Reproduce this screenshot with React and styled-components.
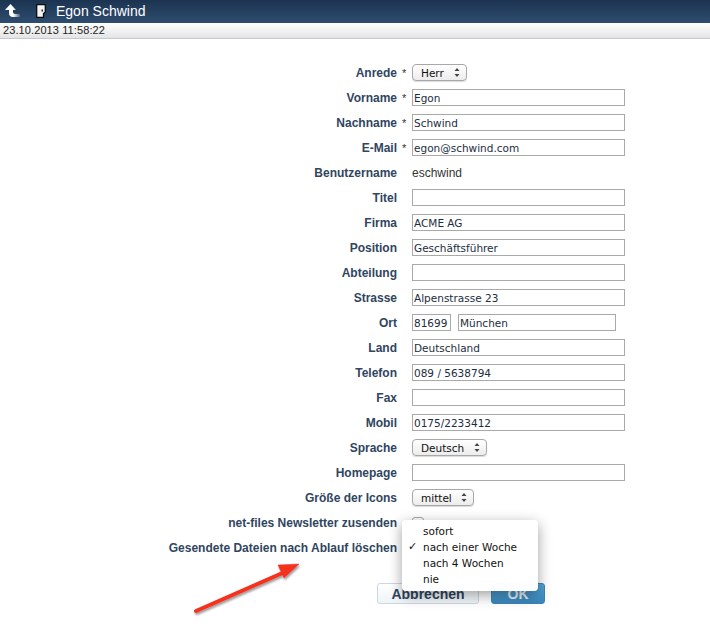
import React from 'react';
import styled, { createGlobalStyle } from 'styled-components';

const GlobalStyle = createGlobalStyle`
  html, body {
    margin: 0;
    padding: 0;
    background: #fff;
    font-family: "Liberation Sans", Arial, sans-serif;
  }
`;

const Page = styled.div`
  position: relative;
  width: 710px;
  height: 641px;
  overflow: hidden;
`;

const Header = styled.header`
  box-sizing: border-box;
  display: flex;
  align-items: center;
  height: 23px;
  padding: 0 0 2px 5px;
  background: linear-gradient(#1b3350, #2f4d70);
  color: #fff;
`;

const HeaderTitle = styled.h1`
  margin: 0 0 0 10px;
  font-size: 14px;
  font-weight: normal;
  line-height: 20px;
`;

const DoorIcon = styled.svg`
  margin-left: 16px;
`;

const DateBar = styled.div`
  height: 15px;
  padding-left: 3px;
  border-bottom: 1px solid #c3c8d2;
  background: linear-gradient(#fff, #e4e4e4);
  font-size: 11px;
  letter-spacing: 0.1px;
  line-height: 15px;
  color: #222;
`;

const Form = styled.div`
  display: grid;
  grid-template-columns: 397px 15px 1fr;
  grid-auto-rows: 25px;
  align-items: center;
  padding-top: 21px;
`;

const Label = styled.label`
  text-align: right;
  font-size: 12px;
  font-weight: bold;
  color: #2f4560;
`;

const Star = styled.span`
  padding-left: 5px;
  font-size: 11px;
  color: #333;
`;

const Field = styled.div`
  display: flex;
  gap: 7px;
  font-size: 12px;
  color: #333;
`;

const TextInput = styled.input`
  box-sizing: border-box;
  width: ${(p) => p.$width || 213}px;
  height: 17px;
  padding: 0 1px;
  border: 1px solid #a9a9a9;
  border-radius: 0;
  outline: none;
  background: #fff;
  font-family: "DejaVu Sans", Verdana, sans-serif;
  font-size: 10.5px;
  color: #1d2d40;
`;

const SelectBox = styled.div`
  box-sizing: border-box;
  display: flex;
  align-items: center;
  justify-content: space-between;
  width: ${(p) => p.$width}px;
  height: 17px;
  padding: 0 6px 0 8px;
  border: 1px solid #a8a8a8;
  border-radius: 4px;
  background: linear-gradient(#fff, #ececec);
  box-shadow: 0 1px 1px rgba(0, 0, 0, 0.15);
  font-family: "DejaVu Sans", Verdana, sans-serif;
  font-size: 10.5px;
  color: #111;
`;

const Checkbox = styled.span`
  display: block;
  box-sizing: border-box;
  width: 12px;
  height: 12px;
  border: 1px solid #a8a8a8;
  border-radius: 3px;
  background: #fff;
`;

const Buttons = styled.div`
  display: flex;
  gap: 12px;
  margin: 23px 0 0 377px;
`;

const Button = styled.button`
  box-sizing: border-box;
  width: ${(p) => p.$width}px;
  height: 21px;
  padding: 0;
  border: 1px solid ${(p) => (p.$primary ? '#3b85b8' : '#ccd8e0')};
  border-radius: 3px;
  background: ${(p) => (p.$primary ? 'linear-gradient(#55a6d8, #3a86bb)' : 'linear-gradient(#fff, #eff4f7)')};
  color: ${(p) => (p.$primary ? '#e8f2f8' : '#2f4560')};
  font-family: "Liberation Sans", Arial, sans-serif;
  font-size: 14px;
  font-weight: bold;
`;

const Menu = styled.ul`
  position: absolute;
  left: 402px;
  top: 520px;
  width: 136px;
  margin: 0;
  padding: 3px 0 4px;
  list-style: none;
  border-radius: 4px;
  background: rgba(255, 255, 255, 0.98);
  box-shadow: 0 4px 14px rgba(0, 0, 0, 0.38);
  font-family: "DejaVu Sans", Verdana, sans-serif;
  font-size: 10.5px;
  color: #111;
`;

const MenuItem = styled.li`
  position: relative;
  height: 16px;
  padding-left: 21px;
  line-height: 16px;
`;

const Check = styled.span`
  position: absolute;
  left: 6px;
  top: 0;
  font-size: 11px;
  font-weight: bold;
`;

const Arrow = styled.svg`
  position: absolute;
  left: 190px;
  top: 558px;
`;

const Chevrons = () => (
  <svg width="6" height="9" viewBox="0 0 6 9">
    <path d="M3 0 L5.5 3 H0.5 Z M3 9 L0.5 6 H5.5 Z" fill="#444" />
  </svg>
);

const rows = [
  { label: 'Anrede', star: true, select: 'Herr', width: 55 },
  { label: 'Vorname', star: true, value: 'Egon' },
  { label: 'Nachname', star: true, value: 'Schwind' },
  { label: 'E-Mail', star: true, value: 'egon@schwind.com' },
  { label: 'Benutzername', text: 'eschwind' },
  { label: 'Titel', value: '' },
  { label: 'Firma', value: 'ACME AG' },
  { label: 'Position', value: 'Geschäftsführer' },
  { label: 'Abteilung', value: '' },
  { label: 'Strasse', value: 'Alpenstrasse 23' },
  { label: 'Ort', city: true },
  { label: 'Land', value: 'Deutschland' },
  { label: 'Telefon', value: '089 / 5638794' },
  { label: 'Fax', value: '' },
  { label: 'Mobil', value: '0175/2233412' },
  { label: 'Sprache', select: 'Deutsch', width: 75 },
  { label: 'Homepage', value: '' },
  { label: 'Größe der Icons', select: 'mittel', width: 62 },
  { label: 'net-files Newsletter zusenden', checkbox: true },
  { label: 'Gesendete Dateien nach Ablauf löschen' },
];

const renderField = (row) => {
  if (row.select) {
    return (
      <SelectBox $width={row.width}>
        {row.select}
        <Chevrons />
      </SelectBox>
    );
  }
  if (row.city) {
    return (
      <>
        <TextInput $width={39} value="81699" readOnly />
        <TextInput $width={158} value="München" readOnly />
      </>
    );
  }
  if (row.checkbox) return <Checkbox />;
  if (row.text) return row.text;
  if (row.value !== undefined) return <TextInput value={row.value} readOnly />;
  return null;
};

const App = () => (
  <Page>
    <GlobalStyle />
    <Header>
      <svg width="15" height="14" viewBox="0 0 15 14">
        <defs>
          <linearGradient id="back-fade" x1="0" x2="1" y1="0" y2="0">
            <stop offset="0.55" stopColor="#fff" />
            <stop offset="1" stopColor="#fff" stopOpacity="0.15" />
          </linearGradient>
        </defs>
        <path d="M5.5 0 L11 6 H8 V8.5 Q8.5 10 11 10 H15 V13 H8 Q4 13 4 9 V6 H0 Z" fill="url(#back-fade)" />
      </svg>
      <DoorIcon width="10" height="14" viewBox="0 0 10 14">
        <path d="M0.7 0.7 H9.3 V8 L7.5 9.5 V13.3 H0.7 Z" fill="#f4f4f4" stroke="#0c0c0c" strokeWidth="1.3" />
        <rect x="5.5" y="5.5" width="1.5" height="2" fill="#222" />
      </DoorIcon>
      <HeaderTitle>Egon Schwind</HeaderTitle>
    </Header>
    <DateBar>23.10.2013 11:58:22</DateBar>
    <Form>
      {rows.map((row) => (
        <React.Fragment key={row.label}>
          <Label>{row.label}</Label>
          <Star>{row.star ? '*' : ''}</Star>
          <Field>{renderField(row)}</Field>
        </React.Fragment>
      ))}
    </Form>
    <Buttons>
      <Button $width={102}>Abbrechen</Button>
      <Button $width={54} $primary>OK</Button>
    </Buttons>
    <Arrow width="120" height="64" viewBox="0 0 120 64">
      <defs>
        <filter id="arrow-shadow" x="-10%" y="-20%" width="120%" height="150%">
          <feDropShadow dx="1" dy="2" stdDeviation="1.3" floodColor="#000" floodOpacity="0.4" />
        </filter>
      </defs>
      <g filter="url(#arrow-shadow)" fill="#f5301f" stroke="#f5301f">
        <line x1="6" y1="53" x2="97" y2="13" strokeWidth="4" strokeLinecap="round" />
        <path d="M88 7 L109 6 L94 20 Z" strokeWidth="0.5" />
      </g>
    </Arrow>
    <Menu>
      <MenuItem>sofort</MenuItem>
      <MenuItem><Check>✓</Check>nach einer Woche</MenuItem>
      <MenuItem>nach 4 Wochen</MenuItem>
      <MenuItem>nie</MenuItem>
    </Menu>
  </Page>
);

export default App;
